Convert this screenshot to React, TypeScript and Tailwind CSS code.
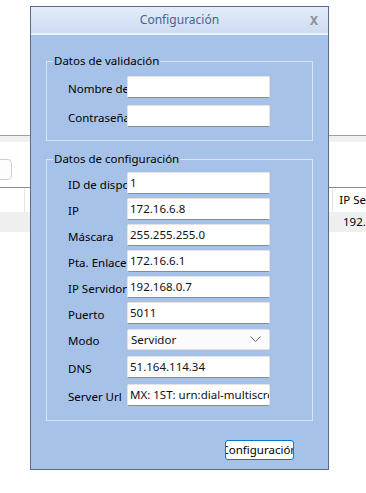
const FONT = { fontFamily: '"Noto Sans", "Open Sans", sans-serif' }

function Row({ label, value, className = "" }: { label: string; value: string; className?: string }) {
  return (
    <div className={`flex items-center h-[22px] ${className}`}>
      <div className="w-[59px] overflow-hidden whitespace-nowrap text-[11.5px] text-black pt-[3px]">{label}</div>
      <div className="w-[143px] h-full bg-white rounded-[2px] border border-[#e3e3e3] border-b-[#8a8a8a] flex items-center pl-[2px] text-[11.5px] text-[#111] whitespace-nowrap overflow-hidden">
        {value}
      </div>
    </div>
  )
}

export default function App() {
  return (
    <div className="relative w-[366px] h-[493px] bg-white overflow-hidden" style={FONT}>
      {/* background window */}
      <div className="h-[135px]" />
      <div className="border-t border-[#a0a0a0] h-[7px] bg-[#f0f0f0]" />
      <div className="h-[45px] flex items-center">
        <div className="-ml-[6px] w-[18px] h-[21px] mt-[10px] rounded-[4px] border border-[#cfcfcf] bg-[#fdfdfd]" />
      </div>
      <div className="border-t border-[#8c8c8c] h-[25px] flex">
        <div className="w-[25px] border-r border-[#e4e4e4]" />
        <div className="w-[312px] border-r border-[#e4e4e4]" />
        <div className="pl-[6px] text-[11.5px] text-black flex items-center whitespace-nowrap">IP Se</div>
      </div>
      <div className="h-[20px] bg-[#efefef] flex">
        <div className="w-[337px]" />
        <div className="pl-[6px] text-[11.5px] text-black flex items-center whitespace-nowrap">192.</div>
      </div>

      {/* dialog */}
      <div className="absolute left-[30px] top-[6px] w-[299px] h-[464px] border border-[#5b6b8c] bg-[#a6c2e8] flex flex-col">
        <div className="h-[28px] bg-gradient-to-b from-[#e3ecf9] to-[#cedcf2] border-b-2 border-[#e9f0fb] flex items-center relative">
          <div className="flex-1 text-center text-[12px] text-[#4a6290]">Configuración</div>
          <div className="absolute right-[10px] top-[5px] text-[12px] font-bold text-[#8e8e8e]">X</div>
        </div>

        <div className="px-[15px] pt-[18px] flex flex-col">
          <fieldset className="border border-[#d9e5f5] pl-[21px] pb-[13px] pt-[7px]">
            <legend className="text-[11.5px] text-black ml-[-15px] px-[1px] leading-[16px]">Datos de validación</legend>
            <div className="flex flex-col gap-[7px]">
              <Row label="Nombre de usuario" value="" className="h-[21px]" />
              <Row label="Contraseña" value="" className="h-[21px]" />
            </div>
          </fieldset>

          <fieldset className="mt-[10px] border border-[#d9e5f5] pl-[21px] pb-[14px] pt-[5px]">
            <legend className="text-[11.5px] text-black ml-[-15px] px-[1px] leading-[16px]">Datos de configuración</legend>
            <div className="flex flex-col gap-[4px]">
              <Row label="ID de dispositivo" value="1" />
              <Row label="IP" value="172.16.6.8" />
              <Row label="Máscara" value="255.255.255.0" />
              <Row label="Pta. Enlace" value="172.16.6.1" />
              <Row label="IP Servidor" value="192.168.0.7" />
              <Row label="Puerto" value="5011" />
              <div className="flex items-center h-[21px] mt-[1px]">
                <div className="w-[59px] overflow-hidden whitespace-nowrap text-[11.5px] text-black pt-[3px]">Modo</div>
                <div className="w-[143px] h-full bg-[#fbfbfb] rounded-[2px] border border-[#e0e0e0] flex items-center pl-[3px] pr-[8px] text-[11.5px] text-[#111]">
                  <span className="flex-1">Servidor</span>
                  <svg width="11" height="7" viewBox="0 0 11 7">
                    <polyline points="0.5,0.5 5.5,5.5 10.5,0.5" fill="none" stroke="#606060" strokeWidth="1" />
                  </svg>
                </div>
              </div>
              <Row label="DNS" value="51.164.114.34" className="mt-[2px]" />
              <Row label="Server Url" value="MX: 1ST: urn:dial-multiscreen-org:service:dial:1" className="mt-[2px]" />
            </div>
          </fieldset>
        </div>

        <div className="flex-1" />
        <div className="flex justify-end pr-[34px] pb-[9px]">
          <div className="w-[69px] h-[20px] rounded-[3px] border border-[#0078d4] bg-white flex items-center justify-center overflow-hidden whitespace-nowrap text-[11.5px] text-black">
            Configuración
          </div>
        </div>
      </div>
    </div>
  )
}
